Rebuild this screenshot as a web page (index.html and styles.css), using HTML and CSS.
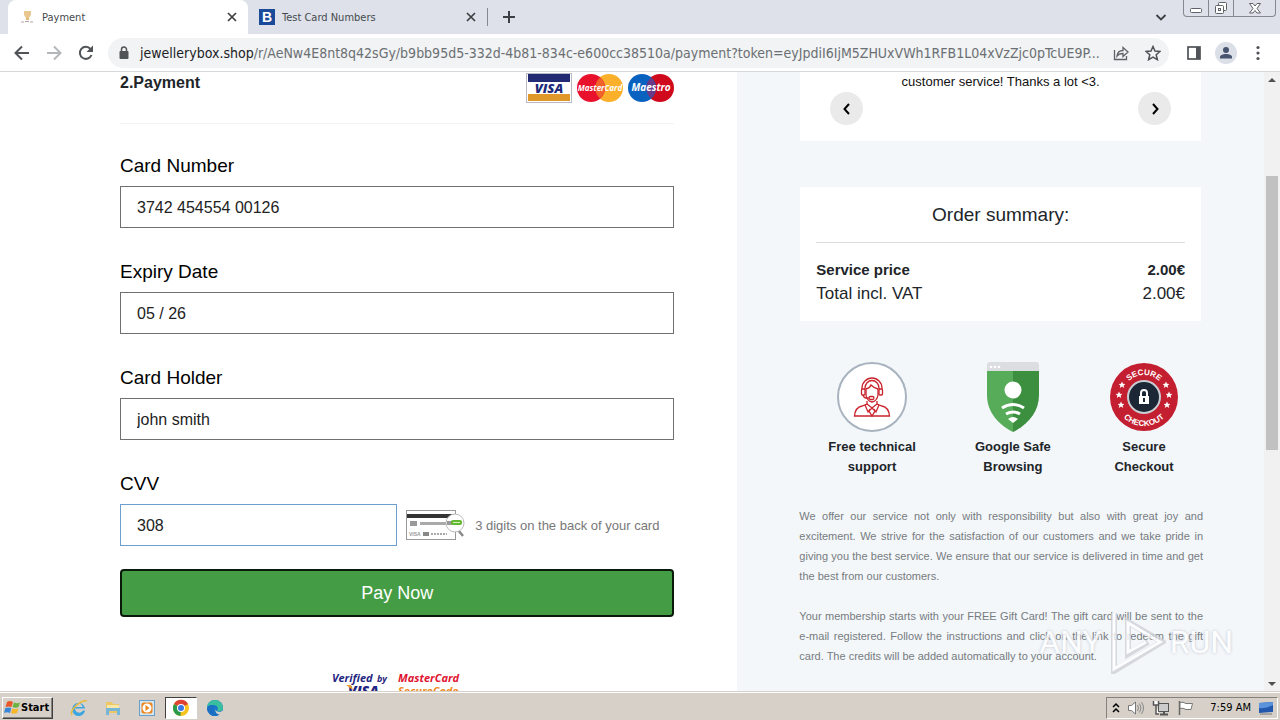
FILE: index.html
```html
<!doctype html>
<html lang="en">
  <head>
    <meta charset="UTF-8" />
    <meta name="viewport" content="width=device-width, initial-scale=1.0" />
    <title>Payment</title>
    <link rel="stylesheet" href="styles.css">
  </head>
  <body>
    <header class="browser">
      <div class="tab-strip">
        <div class="tab active">
          <svg class="favicon" viewBox="0 0 16 16"><path d="M5 2h7v4l-2 3H7L5 6z" fill="#e8c890"/><path d="M7 9h3v2H7z" fill="#e2b872"/><path d="M2 13h3M6 12.500h4M11 13h3" stroke="#b9a6a0"/></svg>
          <span class="tab-title">Payment</span>
          <button class="icon-btn tab-close" aria-label="Close tab"><svg width="10" height="10" viewBox="0 0 10 10"><path d="M1 1l8 8M9 1L1 9" stroke="#3c4043" stroke-width="1.700"/></svg></button>
        </div>
        <div class="tab">
          <svg class="favicon" viewBox="0 0 16 16"><rect width="16" height="16" fill="#1c4a9a"/><text x="8" y="13" text-anchor="middle" font-family="Liberation Sans" font-size="14" font-weight="700" fill="#fff">B</text></svg>
          <span class="tab-title">Test Card Numbers</span>
          <button class="icon-btn tab-close" aria-label="Close tab"><svg width="10" height="10" viewBox="0 0 10 10"><path d="M1 1l8 8M9 1L1 9" stroke="#3c4043" stroke-width="1.700"/></svg></button>
        </div>
        <button class="icon-btn new-tab" aria-label="New tab"><svg width="14" height="14" viewBox="0 0 14 14"><path d="M7 1v12M1 7h12" stroke="#3c4043" stroke-width="2"/></svg></button>
        <button class="icon-btn tab-search" aria-label="Search tabs"><svg width="12" height="12" viewBox="0 0 12 12"><path d="M1.500 4L6 8.500 10.500 4" fill="none" stroke="#3c4043" stroke-width="1.800"/></svg></button>
        <div class="window-btns">
          <button aria-label="Minimize"><svg width="14" height="14" viewBox="0 0 14 14"><rect x="1.500" y="7.500" width="11" height="4" rx="1" fill="#fff" stroke="#5f6368"/></svg></button>
          <button aria-label="Restore"><svg width="14" height="14" viewBox="0 0 14 14" fill="#fff" stroke="#5f6368"><rect x="4.500" y="1.500" width="8" height="8" rx="1"/><rect x="1.500" y="4.500" width="8" height="8" rx="1"/><rect x="4.500" y="7.500" width="2" height="2"/></svg></button>
          <button class="wide" aria-label="Close"><svg width="14" height="14" viewBox="0 0 14 14"><path d="M1.500 2.500h3.500l2 2.500 2-2.500h3.500L9 7.500l3.500 4.500H9L7 9.500 5 12H1.500L5 7.500z" fill="#fff" stroke="#5f6368"/></svg></button>
        </div>
      </div>
      <div class="toolbar">
        <nav class="nav">
          <button class="icon-btn" aria-label="Back"><svg width="16" height="16" viewBox="0 0 16 16"><path d="M15 8H2M8 1.500L1.500 8 8 14.500" fill="none" stroke="#505357" stroke-width="2"/></svg></button>
          <button class="icon-btn" aria-label="Forward"><svg width="16" height="16" viewBox="0 0 16 16"><path d="M1 8h13M8 1.500L14.500 8 8 14.500" fill="none" stroke="#b4b7ba" stroke-width="2"/></svg></button>
          <button class="icon-btn" aria-label="Reload"><svg width="16" height="16" viewBox="0 0 16 16"><path d="M13.500 10A6 6 0 1 1 12.500 4" fill="none" stroke="#505357" stroke-width="2"/><path d="M15 .5V7H8.500z" fill="#505357"/></svg></button>
        </nav>
        <div class="address">
          <svg width="16" height="16" viewBox="0 0 16 16"><rect x="3.500" y="6" width="9" height="8" rx="1" fill="#505357"/><path d="M5.500 6V4.500a2.500 2.500 0 0 1 5 0V6" fill="none" stroke="#505357" stroke-width="1.500"/></svg>
          <span class="url"><b>jewellerybox.shop</b>/r/AeNw4E8nt8q42sGy/b9bb95d5-332d-4b81-834c-e600cc38510a/payment?token=eyJpdiI6IjM5ZHUxVWh1RFB1L04xVzZjc0pTcUE9P...</span>
          <div class="nav">
            <button class="icon-btn" aria-label="Share"><svg width="16" height="16" viewBox="0 0 16 16" fill="none" stroke="#5f6368" stroke-width="1.300"><path d="M1.500 5v9.500h12V11"/><path d="M4 11c.5-4 3-5.500 6-5.500v-3L15 7l-5 4.500v-3c-3 0-4.500.5-6 2.500z"/></svg></button>
            <button class="icon-btn" aria-label="Bookmark"><svg width="16" height="16" viewBox="0 0 16 16"><path d="M8 1.500l2 4.600 5 .4-3.800 3.300 1.200 4.900L8 12.100l-4.400 2.600 1.200-4.900L1 6.500l5-.4z" fill="none" stroke="#505357" stroke-width="1.500"/></svg></button>
          </div>
        </div>
        <div class="actions">
          <button class="icon-btn" aria-label="Side panel"><svg width="14" height="14" viewBox="0 0 14 14"><rect x="1" y="1" width="12" height="12" fill="none" stroke="#505357" stroke-width="1.700"/><path d="M9 1h4v12H9z" fill="#505357"/></svg></button>
          <button class="icon-btn avatar" aria-label="Profile"><svg width="14" height="14" viewBox="0 0 14 14" fill="#46546f"><circle cx="7" cy="4" r="3"/><path d="M1 12.500V11c0-2 3-3 6-3s6 1 6 3v1.500z"/></svg></button>
          <button class="icon-btn" aria-label="Menu"><svg width="16" height="16" viewBox="0 0 16 16" fill="#505357"><circle cx="8" cy="2.500" r="1.600"/><circle cx="8" cy="8" r="1.600"/><circle cx="8" cy="13.500" r="1.600"/></svg></button>
        </div>
      </div>
    </header>

    <div class="viewport">
      <main class="page">
        <section class="payment">
          <div class="payment-head">
            <h1>2.Payment</h1>
            <div class="cards">
              <svg width="46" height="30" viewBox="0 0 46 30"><rect x=".5" y=".5" width="45" height="29" fill="#fff" stroke="#b9b9c4"/><path d="M2 1h42v8H2z" fill="#222a74"/><path d="M2 21h42v7H2z" fill="#e0982a"/><text x="23" y="20" text-anchor="middle" font-family="Open Sans" font-size="13" font-weight="800" font-style="italic" fill="#20297a">VISA</text></svg>
              <svg width="46" height="30" viewBox="0 0 46 30"><circle cx="32" cy="15" r="14" fill="#fbb02b"/><circle cx="14" cy="15" r="14" fill="#e8122c"/><path d="M23 4.500a14 14 0 0 1 0 21 14 14 0 0 1 0-21z" fill="#f0642c"/><text x="23" y="18" text-anchor="middle" font-family="Open Sans" font-size="8" font-weight="700" font-style="italic" fill="#fff">MasterCard</text></svg>
              <svg width="46" height="30" viewBox="0 0 46 30"><circle cx="32" cy="15" r="14" fill="#cf0a1c"/><circle cx="14" cy="15" r="14" fill="#0a62c0"/><path d="M23 4.500a14 14 0 0 1 0 21 14 14 0 0 1 0-21z" fill="#6a3a86"/><text x="23" y="18" text-anchor="middle" font-family="Open Sans" font-size="10" font-weight="700" font-style="italic" fill="#fff">Maestro</text></svg>
            </div>
          </div>
          <form class="card-form">
            <div class="field">
              <label for="number">Card Number</label>
              <input type="text" id="number" value="3742 454554 00126">
            </div>
            <div class="field">
              <label for="expiry">Expiry Date</label>
              <input type="text" id="expiry" value="05 / 26">
            </div>
            <div class="field">
              <label for="holder">Card Holder</label>
              <input type="text" id="holder" value="john smith">
            </div>
            <div class="field cvv">
              <label for="cvv">CVV</label>
              <div class="cvv-row">
                <input type="text" id="cvv" class="focused" value="308">
                <svg width="60" height="32" viewBox="0 0 60 32"><rect x=".5" y="1.500" width="49" height="29" fill="#fff" stroke="#999"/><path d="M1 5h48v4H1z" fill="#333"/><path d="M4 12h7v5H4z" fill="#999"/><path d="M14 13h28v3H14z" fill="#aaa"/><path d="M17 23h6v4h-6z" fill="#888"/><text x="3" y="27" font-family="Liberation Sans" font-size="5" font-weight="700" fill="#999">VISA</text><path d="M25 25h16" stroke="#aaa" stroke-width="2" stroke-dasharray="2 1"/><path d="M52 21l5 6" stroke="#888" stroke-width="2.500"/><circle cx="49" cy="14" r="9" fill="#fff" stroke="#bbb"/><path d="M41 12h5v4h-5z" fill="#999"/><rect x="45" y="11" width="11" height="5" rx="2" fill="#62b82e"/><path d="M47 13.500h7" stroke="#d8f2c4"/></svg>
                <span class="hint">3 digits on the back of your card</span>
              </div>
            </div>
            <button type="button" class="pay-btn">Pay Now</button>
          </form>
          <div class="secure-logos">
            <svg width="58" height="30" viewBox="0 0 58 30"><text x="0" y="12" font-family="Open Sans" font-size="11" font-weight="700" font-style="italic" fill="#1f2480">Verified</text><text x="45" y="12" font-family="Open Sans" font-size="9" font-weight="700" font-style="italic" fill="#1f2480">by</text><text x="16" y="26" font-family="Open Sans" font-size="14" font-weight="800" font-style="italic" fill="#1f2480">VISA</text><path d="M14 15h5l2 5z" fill="#f0a030"/></svg>
            <svg width="64" height="30" viewBox="0 0 64 30" font-family="Open Sans" font-weight="700" font-style="italic" font-size="11"><text x="0" y="12" fill="#df1431">MasterCard</text><text x="0" y="25" fill="#f08a1e">SecureCode</text></svg>
          </div>
        </section>

        <aside class="sidebar">
          <div class="review box">
            <p>customer service! Thanks a lot &lt;3.</p>
            <div class="review-nav">
              <button aria-label="Previous"><svg width="10" height="14" viewBox="0 0 10 14"><path d="M7 2L2.500 7 7 12" fill="none" stroke="#000" stroke-width="2"/></svg></button>
              <button aria-label="Next"><svg width="10" height="14" viewBox="0 0 10 14"><path d="M3 2L7.500 7 3 12" fill="none" stroke="#000" stroke-width="2"/></svg></button>
            </div>
          </div>

          <div class="summary box">
            <h2>Order summary:</h2>
            <table>
              <tr class="service"><th>Service price</th><td>2.00€</td></tr>
              <tr class="total"><th>Total incl. VAT</th><td>2.00€</td></tr>
            </table>
          </div>

          <div class="badges">
            <div class="badge">
              <svg width="70" height="70" viewBox="0 0 70 70"><circle cx="35" cy="35" r="34" fill="#fff" stroke="#a9b3c0" stroke-width="2"/><g fill="none" stroke="#c9232b" stroke-width="1.300"><path d="M25 27v-1a10 10 0 0 1 20 0v1"/><path d="M28 27v-1a7 7.500 0 0 1 14 0v1"/><path d="M29 27q4-1 5-4 3 3 7 4v6q-1 6-6 7-5-1-6-7z"/><rect x="24.500" y="27" width="3.500" height="6" rx="1"/><rect x="42" y="27" width="3.500" height="6" rx="1"/><path d="M26 33q1 4 6 3"/><rect x="32" y="34.500" width="5" height="3" rx="1.500"/><path d="M30 39v3l-5 2c-5 1-7 4-7.500 10h35c-.5-6-2.500-9-7.500-10l-5-2v-3"/><path d="M30 42l5 4 5-4M35 46l-3 3 3 5 3-5zM28 43l3 7 2-3M42 43l-3 7-2-3"/></g></svg>
              <p>Free technical<br>support</p>
            </div>
            <div class="badge">
              <svg width="52" height="70" viewBox="0 0 52 70"><path d="M0 9V3q0-3 3-3h46q3 0 3 3v6z" fill="#dcdde0"/><path d="M0 9h26v61C10 62 0 49 0 33z" fill="#56ac58"/><path d="M26 9h26v24c0 16-10 29-26 37z" fill="#3b8f3f"/><circle cx="4" cy="5" r="1.300" fill="#fff"/><circle cx="8" cy="5" r="1.300" fill="#fff"/><circle cx="12" cy="5" r="1.300" fill="#fff"/><circle cx="26" cy="28" r="8.500" fill="#fff"/><path d="M15 46q11-7 22 0M19 52q7-4 14 0" fill="none" stroke="#fff" stroke-width="3"/><path d="M21 57q5-4 10 0l-5 4z" fill="#fff"/></svg>
              <p>Google Safe<br>Browsing</p>
            </div>
            <div class="badge">
              <svg width="68" height="70" viewBox="0 0 68 70"><circle cx="34" cy="35" r="34" fill="#c41f30"/><circle cx="34" cy="35" r="17" fill="#c9cdd2"/><circle cx="34" cy="35" r="15" fill="#1b2735"/><rect x="29" y="34" width="10" height="8" fill="#fff"/><path d="M31 34v-3a3 3 0 0 1 6 0v3" fill="none" stroke="#fff" stroke-width="2"/><path d="M34 36v4" stroke="#1b2735" stroke-width="2"/><defs><path id="arc-top" d="M12 35a22 22 0 0 1 44 0"/><path id="arc-bottom" d="M5 35a29 29 0 0 0 58 0"/></defs><g font-family="Liberation Sans" font-size="8" font-weight="700" fill="#fff" text-anchor="middle"><text><textPath href="#arc-top" startOffset="50%">SECURE</textPath></text><text><textPath href="#arc-bottom" startOffset="50%">CHECKOUT</textPath></text></g><g fill="#fff"><path id="star" d="M9 29.500l1 2.200 2.400.2-1.800 1.600.6 2.400L9 34.600l-2.200 1.300.6-2.400-1.800-1.600 2.400-.2z"/><use href="#star" x="3" y="-10"/><use href="#star" x="2" y="10"/><use href="#star" x="50"/><use href="#star" x="47" y="-10"/><use href="#star" x="48" y="10"/></g></svg>
              <p>Secure<br>Checkout</p>
            </div>
          </div>

          <div class="terms">
            <p>We offer our service not only with responsibility but also with great joy and excitement. We strive for the satisfaction of our customers and we take pride in giving you the best service. We ensure that our service is delivered in time and get the best from our customers.</p>
            <p>Your membership starts with your FREE Gift Card! The gift card will be sent to the e-mail registered. Follow the instructions and click on the link to redeem the gift card. The credits will be added automatically to your account.</p>
          </div>
        </aside>
      </main>

      <div class="scrollbar">
        <svg width="16" height="16" viewBox="0 0 16 16"><path d="M4 10h8L8 6z" fill="#505050"/></svg>
        <div class="track"><div class="thumb"></div></div>
        <svg width="16" height="16" viewBox="0 0 16 16"><path d="M4 6h8l-4 4z" fill="#505050"/></svg>
      </div>

      <div class="watermark">
        <span>ANY</span>
        <svg width="60" height="64" viewBox="0 0 60 64"><path d="M8 3v58L56 32 22 12v32l20-12" fill="none" stroke="#cfd1d8" stroke-width="6"/><path d="M8 3v56L54 32 22 13v29l18-10" fill="none" stroke="#fff" stroke-width="3"/></svg>
        <span>RUN</span>
      </div>
    </div>

    <footer class="taskbar">
      <button class="start"><svg width="17" height="16" viewBox="0 0 17 16"><path d="M3 2q3-2 6 0L7.500 7q-3-1-6 0z" fill="#e8582a"/><path d="M10 2.500q3 1.500 6 0L14.500 7q-3 1.500-6 0z" fill="#6db33f"/><path d="M1.300 8q3-1 6 0L6 13q-3-1.500-6 0z" fill="#3a86d8"/><path d="M8.300 8.500q3 1.500 6 0L13 13q-3 1.500-6 0z" fill="#f6b828"/></svg>Start</button>
      <div class="launchers">
        <button aria-label="Internet Explorer"><svg width="18" height="18" viewBox="0 0 18 18"><path d="M14.500 9.500H5a4.300 4.300 0 0 0 8 2h2A6.500 6.500 0 1 1 15 9.500zM5 8h7.500A3.800 3.800 0 0 0 5 8z" fill="#3da5e0" fill-rule="evenodd"/><path d="M2 16C-1 11 12 0 17 2" fill="none" stroke="#e9bb3c" stroke-width="1.500"/></svg></button>
        <button aria-label="File Explorer"><svg width="18" height="18" viewBox="0 0 18 18"><path d="M2 3h6l1 2h6v9H2z" fill="#ecc763"/><path d="M3 6h12v6H3z" fill="#f9e8a8"/><path d="M2 9h14v7h-3v-4H5v4H2z" fill="#78b6d8"/></svg></button>
        <button aria-label="Media Player"><svg width="18" height="18" viewBox="0 0 18 18"><rect x="1.500" y="1.500" width="15" height="15" fill="#d6e6f2" stroke="#6a9fcc"/><rect x="3.500" y="3.500" width="11" height="11" rx="2" fill="#ee861f"/><circle cx="9" cy="9" r="4.500" fill="#fff"/><path d="M7.500 6l4 3-4 3z" fill="#ee861f"/></svg></button>
        <button class="pressed" aria-label="Chrome"><svg width="18" height="18" viewBox="0 0 18 18"><circle cx="9" cy="9" r="8" fill="#f9c31f"/><path d="M9 9L2 5a8 8 0 0 1 14 0z" fill="#dd4234"/><path d="M9 9L2 5a8 8 0 0 0 6.500 12z" fill="#2c9a4b"/><circle cx="9" cy="9" r="4" fill="#fff"/><circle cx="9" cy="9" r="3" fill="#3b78e7"/></svg></button>
        <button aria-label="Edge"><svg width="18" height="18" viewBox="0 0 18 18"><circle cx="9" cy="9" r="8" fill="#1673c8"/><path d="M1 9a8 8 0 0 1 16 0c0 3-3 4-6 3 2-3 0-6-4-6-3 0-5 1-6 3z" fill="#39bfa0"/><path d="M1 9c1-3 5-4 7-2-3 3-1 8 4 9.500A8 8 0 0 1 1 9z" fill="#1b6fc2"/><path d="M9 8q-1 4 4 5 2 0 3-1l2 1-3 3q-7-1-6-8z" fill="#d6d0c8"/></svg></button>
      </div>
      <div class="tray">
        <svg width="8" height="12" viewBox="0 0 8 12"><path d="M1 5l3-3 3 3M1 10l3-3 3 3" fill="none" stroke="#000" stroke-width="1.500"/></svg>
        <svg width="18" height="16" viewBox="0 0 18 16"><path d="M1.500 5.500h3L8.500 2v12l-4-3.500h-3z" fill="#fff" stroke="#777"/><path d="M10.500 5q2 3 0 6M12.500 3.500q3 4.500 0 9M14.500 2q4 6 0 12" fill="none" stroke="#888"/></svg>
        <svg width="18" height="16" viewBox="0 0 18 16"><rect x="6.500" y="3.500" width="10" height="8" fill="#ccc" stroke="#555"/><path d="M8 14.500h8M12 12v2" stroke="#555" stroke-width="2"/><path d="M1.500 1v4h5V1M4 5v9h3" fill="#fff" stroke="#555" stroke-width="1.500"/></svg>
        <svg width="18" height="16" viewBox="0 0 18 16"><path d="M2.500 1v14" stroke="#666" stroke-width="1.500"/><path d="M3 2.500q3-1 6 1h6.500l-1.500 6H9q-3-2-6-1z" fill="#fff" stroke="#777"/></svg>
        <span class="clock">7:59 AM</span>
        <svg width="16" height="14" viewBox="0 0 16 14"><path d="M1 2l14-1v10L1 12z" fill="#2458ae"/><path d="M1 2l14-1v3Q8 8 1 7z" fill="#5b93dc"/><path d="M2 13h12" stroke="#777"/></svg>
      </div>
    </footer>
  </body>
</html>
```

FILE: styles.css
```css
* {
  margin: 0;
  padding: 0;
  box-sizing: border-box;
}

body {
  font-family: "Liberation Sans", Arial, sans-serif;
  height: 100vh;
  display: flex;
  flex-direction: column;
  overflow: hidden;
  background: #fff;
  color: #212529;
}

svg {
  display: block;
  flex-shrink: 0;
}

button {
  font-family: inherit;
  cursor: pointer;
}

/* browser chrome */

.browser {
  font-family: "DejaVu Sans Condensed", "DejaVu Sans", sans-serif;
  border-bottom: 1px solid #d5d8db;
}

.tab-strip {
  height: 34px;
  display: flex;
  align-items: center;
  padding: 0 4px 0 8px;
  background: #dee1e9;
}

.tab {
  width: 240px;
  height: 34px;
  display: flex;
  align-items: center;
  gap: 7px;
  padding: 0 11px;
  font-size: 11px;
  color: #45494d;
  border-right: 1px solid #85898e;
  border-image: linear-gradient(transparent 24%, #85898e 24%, #85898e 76%, transparent 76%) 1;
}

.tab.active {
  background: #fff;
  border: none;
  border-radius: 8px 8px 0 0;
}

.favicon {
  width: 16px;
  height: 16px;
}

.tab-title {
  flex: 1;
}

.icon-btn {
  display: flex;
  align-items: center;
  justify-content: center;
  border: none;
  background: none;
}

.new-tab {
  margin-left: 14px;
}

.tab-search {
  margin-left: auto;
}

.window-btns {
  display: flex;
  align-self: flex-start;
  height: 17px;
  margin-left: 16px;
  border: 1px solid #85898e;
  border-top: none;
  border-radius: 0 0 4px 4px;
}

.window-btns button {
  width: 25px;
  display: flex;
  align-items: center;
  justify-content: center;
  border: none;
  border-right: 1px solid #85898e;
  background: none;
}

.window-btns .wide {
  width: 41px;
  border-right: none;
}

.toolbar {
  height: 37px;
  display: flex;
  align-items: center;
  gap: 14px;
  padding: 0 11px 0 14px;
  background: #fff;
}

.nav {
  display: flex;
  gap: 16px;
}

.address {
  flex: 1;
  min-width: 0;
  height: 30px;
  display: flex;
  align-items: center;
  gap: 8px;
  padding: 0 8px;
  border-radius: 15px;
  background: #f1f3f4;
}

.url {
  flex: 1;
  min-width: 0;
  white-space: nowrap;
  font-size: 14px;
  color: #6b6f73;
}

.url b {
  font-weight: 400;
  color: #202124;
}

.actions {
  display: flex;
  gap: 10px;
}

.actions .icon-btn {
  width: 22px;
  height: 22px;
}

.avatar {
  border-radius: 50%;
  background: #dbdfe8;
}

/* page */

.viewport {
  flex: 1;
  min-height: 0;
  display: flex;
  position: relative;
  overflow: hidden;
}

.page {
  flex: 1;
  display: grid;
  grid-template-columns: 7fr 5fr;
}

.payment {
  padding: 0 63px 0 120px;
}

.payment-head {
  height: 52px;
  display: flex;
  justify-content: space-between;
  align-items: flex-start;
  border-bottom: 1px solid #f3f3f3;
}

.payment-head h1 {
  font-size: 16px;
  line-height: 22px;
}

.cards {
  display: flex;
  gap: 5px;
  padding-top: 1px;
}

.card-form {
  padding-top: 30px;
}

.field {
  margin-bottom: 32px;
}

.field.cvv {
  margin-bottom: 23px;
}

.field label {
  display: block;
  margin-bottom: 8px;
  font-size: 19px;
  line-height: 24px;
  color: #000;
}

.field input {
  display: block;
  width: 100%;
  height: 42px;
  padding: 1px 16px 0;
  border: 1px solid #707070;
  font-family: inherit;
  font-size: 16px;
  color: #222;
}

.cvv-row {
  display: flex;
  align-items: center;
  gap: 9px;
}

.field .focused {
  width: 50%;
  border-color: #6c9fd0;
  outline: none;
}

.hint {
  font-size: 13px;
  color: #777;
  white-space: nowrap;
}

.pay-btn {
  display: block;
  width: 100%;
  height: 48px;
  border: 2px solid #0a1a0a;
  border-radius: 4px;
  background: #449d44;
  color: #fff;
  font-size: 18px;
}

.secure-logos {
  display: flex;
  justify-content: center;
  gap: 8px;
  padding-top: 53px;
}

.sidebar {
  padding: 0 63px;
  background: #f3f7fa;
}

.box {
  background: #fff;
}

.review {
  padding: 0 30px 16px;
}

.review p {
  font-size: 13px;
  line-height: 20px;
  text-align: center;
  color: #111;
}

.review-nav {
  display: flex;
  justify-content: space-between;
}

.review-nav button {
  width: 33px;
  height: 33px;
  display: flex;
  align-items: center;
  justify-content: center;
  border: none;
  border-radius: 50%;
  background: #eaeaea;
}

.summary {
  margin-top: 46px;
  padding: 16px 16px 15px;
}

.summary h2 {
  padding-bottom: 15px;
  margin-bottom: 15px;
  border-bottom: 1px solid #dedede;
  font-size: 19px;
  font-weight: 400;
  line-height: 24px;
  text-align: center;
}

.summary table {
  width: 100%;
  border-collapse: collapse;
  line-height: 24px;
}

.summary th {
  text-align: left;
}

.summary td {
  text-align: right;
}

.service {
  font-size: 15px;
}

.service td {
  font-weight: 700;
}

.total {
  font-size: 17px;
}

.total th,
.total td {
  font-weight: 400;
}

.badges {
  display: flex;
  justify-content: space-between;
  margin-top: 41px;
  padding: 0 23px 0 28px;
}

.badge {
  display: flex;
  flex-direction: column;
  align-items: center;
  gap: 5px;
  font-size: 13px;
  font-weight: 700;
  line-height: 20px;
  text-align: center;
}

.terms {
  margin: 29px -2px 0 -1px;
  font-size: 11px;
  line-height: 20px;
  text-align: justify;
  color: #777b80;
}

.terms p {
  margin-bottom: 20px;
}

.scrollbar {
  width: 16px;
  display: flex;
  flex-direction: column;
  background: #f1f1f1;
}

.track {
  flex: 1;
  display: grid;
  grid-template-rows: 88fr 274fr 226fr;
  padding: 0 2px;
}

.thumb {
  grid-row: 2;
  background: #c1c1c1;
}

.watermark {
  position: absolute;
  right: 47px;
  bottom: 18px;
  display: flex;
  align-items: center;
  gap: 4px;
  font-family: Roboto, sans-serif;
  font-size: 32px;
  color: #fff;
  text-shadow: 0 0 3px #b4b6c0;
  opacity: 0.8;
}

/* taskbar */

.taskbar {
  height: 28px;
  display: flex;
  align-items: center;
  padding: 2px 2px 0;
  border-top: 1px solid #fff;
  background: #d6d0c8;
  box-shadow: 0 -1px #d6d0c8;
  z-index: 1;
}

.start {
  height: 22px;
  display: flex;
  align-items: center;
  padding: 0 3px 0 1px;
  border: 1px solid;
  border-color: #fff #404040 #404040 #fff;
  background: #d6d0c8;
  box-shadow: inset -1px -1px #85817c;
  font-family: "DejaVu Sans Condensed", "DejaVu Sans", sans-serif;
  font-size: 11px;
  font-weight: 700;
  color: #000;
}

.launchers {
  display: flex;
  margin-left: 10px;
  gap: 2px;
}

.launchers button {
  width: 32px;
  height: 22px;
  display: flex;
  align-items: center;
  justify-content: center;
  border: none;
  background: none;
}

.launchers .pressed {
  border: 1px solid;
  border-color: #404040 #fff #fff #404040;
  background: #fff;
}

.tray {
  height: 22px;
  display: flex;
  align-items: center;
  gap: 7px;
  margin-left: auto;
  padding: 0 3px 0 5px;
  border: 1px solid;
  border-color: #85817c #fff #fff #85817c;
  font-family: "DejaVu Sans Condensed", "DejaVu Sans", sans-serif;
  font-size: 11px;
  color: #000;
}

.clock {
  margin-left: 8px;
}
```
